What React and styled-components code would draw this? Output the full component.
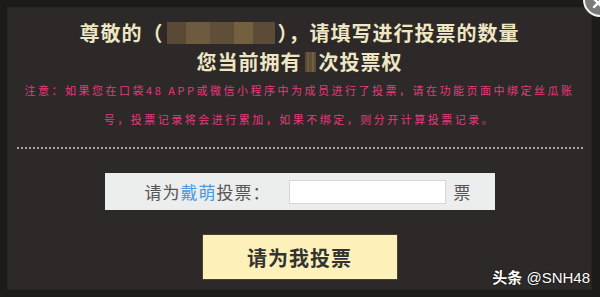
import React, { useState } from 'react';
import styled, { createGlobalStyle } from 'styled-components';

const GlobalStyle = createGlobalStyle`
  html, body {
    margin: 0;
    padding: 0;
    background: #1d1b1a;
  }
  body {
    font-family: "Noto Sans CJK SC", "Noto Sans", sans-serif;
  }
`;

const candidate = '戴萌';

function App() {
  const [count, setCount] = useState('');

  return (
    <StFrame>
      <GlobalStyle />
      <StPanel>
        <StTitle>
          尊敬的（<StMosaic $w={108} $h={22} />），请填写进行投票的数量
        </StTitle>
        <StTitle>
          您当前拥有<StMosaic $w={11} $h={20} />次投票权
        </StTitle>
        <StNotice>
          注意：如果您在口袋48 APP或微信小程序中为成员进行了投票，请在功能页面中绑定丝瓜账
          <br />
          号，投票记录将会进行累加，如果不绑定，则分开计算投票记录。
        </StNotice>
        <StDivider />
        <StVoteRow>
          <StLabel>
            请为<StName>{candidate}</StName>投票：
          </StLabel>
          <StCountInput value={count} onChange={(e) => setCount(e.target.value)} />
          <StUnit>票</StUnit>
        </StVoteRow>
        <StSubmitButton>请为我投票</StSubmitButton>
      </StPanel>
      <StCloseButton aria-label="close">
        <svg width="14" height="14" viewBox="0 0 14 14">
          <path d="M3 3 L11 11 M11 3 L3 11" stroke="#fff" strokeWidth="2.4" strokeLinecap="round" />
        </svg>
      </StCloseButton>
      <StWatermark>
        <b>头条</b> @SNH48
      </StWatermark>
    </StFrame>
  );
}

export default App;

const StFrame = styled.div`
  position: relative;
  width: 600px;
  height: 297px;
  padding: 7px 8px 7px 7px;
  box-sizing: border-box;
  overflow: hidden;
  background: #1d1b1a;
`;

const StPanel = styled.div`
  display: flex;
  flex-direction: column;
  align-items: center;
  width: 585px;
  height: 283px;
  padding-top: 11px;
  box-sizing: border-box;
  background: #2c2928;
  box-shadow: inset 0 0 0 1px #262322;
`;

const StTitle = styled.div`
  display: flex;
  align-items: center;
  height: 29px;
  font-size: 20px;
  font-weight: 700;
  color: #efe6c4;
  letter-spacing: 1px;
  white-space: nowrap;
`;

const StMosaic = styled.span`
  display: inline-block;
  width: ${(p) => p.$w}px;
  height: ${(p) => p.$h}px;
  margin: 0 3px;
  background:
    linear-gradient(90deg, #5a4a35 0 18%, #6e5a3e 18% 40%, #5f4e38 40% 62%, #74603f 62% 80%, #5c4b36 80% 100%);
`;

const StNotice = styled.div`
  font-size: 11px;
  line-height: 29px;
  letter-spacing: 2.5px;
  color: #e8387f;
  text-align: center;
  white-space: nowrap;
`;

const StDivider = styled.div`
  align-self: stretch;
  margin: 13px 9px 0 10px;
  border-top: 2px dotted #a8a8a8;
`;

const StVoteRow = styled.div`
  display: flex;
  align-items: center;
  width: 390px;
  height: 37px;
  margin-top: 24px;
  padding-left: 40px;
  box-sizing: border-box;
  background: #eceded;
`;

const StLabel = styled.span`
  font-size: 17px;
  letter-spacing: 1px;
  color: #555;
  white-space: nowrap;
`;

const StName = styled.span`
  color: #4a9be0;
`;

const StCountInput = styled.input`
  width: 157px;
  height: 24px;
  margin-left: 18px;
  padding: 0 4px;
  box-sizing: border-box;
  border: 1px solid #d6d6d6;
  background: #fff;
  outline: none;
`;

const StUnit = styled.span`
  margin-left: 8px;
  font-size: 17px;
  color: #555;
`;

const StSubmitButton = styled.button`
  width: 196px;
  height: 46px;
  margin-top: 24px;
  border: 1px solid #4a4030;
  background: #fdf0b8;
  font-family: "Noto Sans CJK SC", "Noto Sans", sans-serif;
  font-size: 20px;
  font-weight: 700;
  color: #333;
  letter-spacing: 1px;
  cursor: pointer;
`;

const StCloseButton = styled.div`
  position: absolute;
  top: -17px;
  right: -17px;
  display: flex;
  align-items: flex-end;
  justify-content: flex-start;
  width: 34px;
  height: 34px;
  padding: 0 0 5px 6px;
  box-sizing: border-box;
  border: 2px solid #f2f2f2;
  border-radius: 50%;
  background: #7a7a7a;
`;

const StWatermark = styled.div`
  position: absolute;
  right: 10px;
  bottom: 10px;
  font-family: "Liberation Sans", "Noto Sans CJK SC", sans-serif;
  font-size: 15px;
  color: #fff;
  text-shadow: 0 0 2px rgba(0, 0, 0, 0.8);

  b {
    font-family: "Noto Sans CJK SC", sans-serif;
  }
`;
